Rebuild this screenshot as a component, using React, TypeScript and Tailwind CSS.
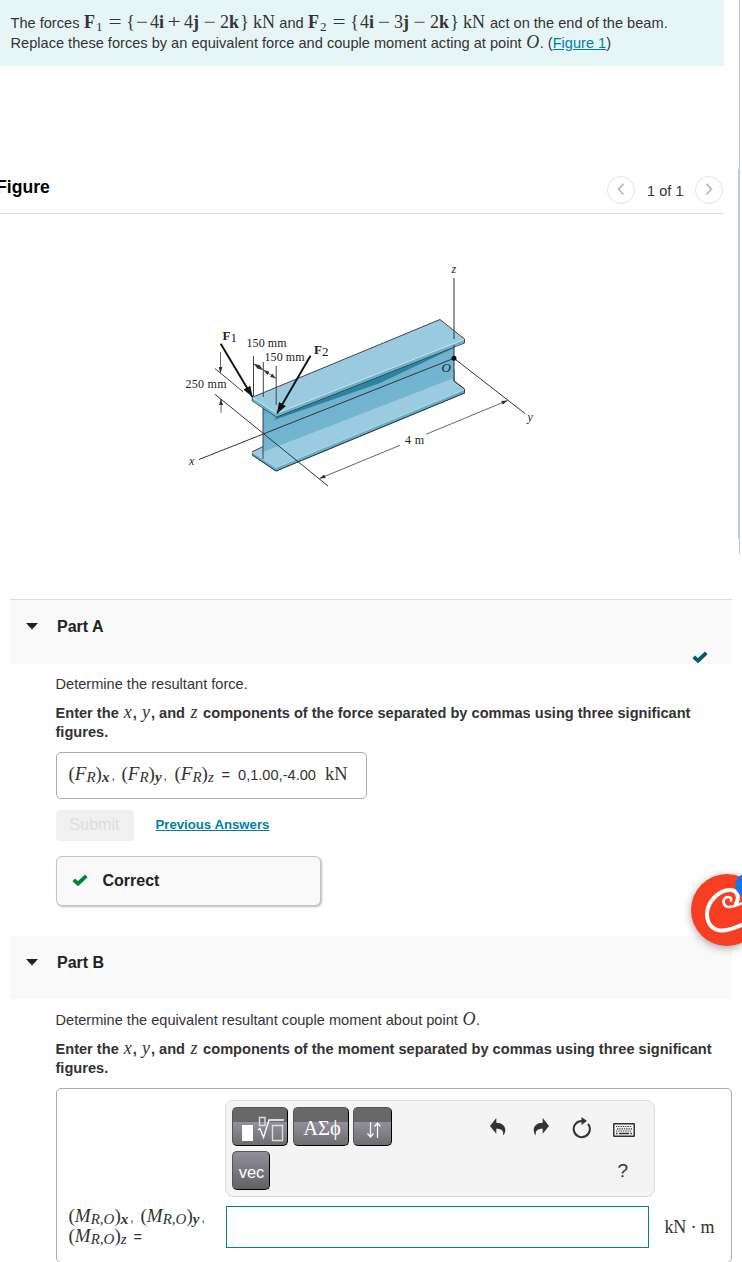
import { ReactNode } from 'react';

// a single glyph group of a formula, centred in its own slot
const Tok = ({ className = '', children }: { className?: string; children: ReactNode }) => (
  <span className={`inline-block whitespace-nowrap text-center ${className}`}>{children}</span>
);

interface VectorProps {
  index: string;
  first: ReactNode;
  second: ReactNode;
}

const Vector = ({ index, first, second }: VectorProps) => (
  <span className='inline-flex items-baseline font-["Liberation_Serif",serif] text-[18px] leading-5'>
    <Tok className="w-[22px] text-left font-bold">
      F<span className="relative top-[3px] ml-px text-[13px] font-normal leading-none">{index}</span>
    </Tok>
    <Tok className="w-[18px] scale-x-130">=</Tok>
    <Tok className="w-[11px] text-right">{'{'}</Tok>
    {first}
    {second}
    <Tok className="w-[21px] scale-x-120">−</Tok>
    <Tok className="w-[20px] text-left">2<b>k</b></Tok>
    <Tok className="w-[9px]">{'}'}</Tok>
    <Tok className="w-[26px] text-right">kN</Tok>
  </span>
);

interface ComponentLabelProps {
  name: string;
  sub: string;
  axis: string;
  end?: string;
  className: string;
}

const ComponentLabel = ({ name, sub, axis, end, className }: ComponentLabelProps) => (
  <span className={`inline-block whitespace-nowrap font-["Liberation_Serif",serif] text-[19px] leading-5 ${className}`}>
    (<i>{name}</i>
    <span className="relative top-0.5 text-[15px] italic leading-none">{sub}</span>)
    <span className={`relative top-0.5 text-[15px] italic leading-none ${axis === 'z' ? '' : 'font-bold'}`}>{axis}</span>
    {end && <span className='ml-[2px] font-["Liberation_Sans",sans-serif] text-[12px] leading-none'>{end}</span>}
  </span>
);

const Check = ({ className }: { className: string }) => (
  <svg className={className} width="16" height="12" viewBox="0 0 16 12" fill="none">
    <path d="M1.700 5.800 6 9.700 14.300 1.800" stroke="currentColor" strokeWidth="3.800" />
  </svg>
);

const Beam = () => (
  <svg className='block font-["Liberation_Serif",serif]' width="742" height="385" viewBox="0 214 742 385" fill="none">
    <defs>
      <linearGradient id="web" x1="340" y1="370" x2="360" y2="418" gradientUnits="userSpaceOnUse">
        <stop offset="0" stopColor="#2f8aa6" />
        <stop offset="0.25" stopColor="#6bb1ce" />
        <stop offset="1" stopColor="#75b6d2" />
      </linearGradient>
      <marker id="tip" viewBox="0 0 11 8" refX="11" refY="4" markerWidth="11" markerHeight="8" markerUnits="userSpaceOnUse" orient="auto">
        <path d="M0 0 11 4 0 8z" fill="#111" />
      </marker>
      <marker id="dim" viewBox="0 0 6 4" refX="6" refY="2" markerWidth="6" markerHeight="4" markerUnits="userSpaceOnUse" orient="auto-start-reverse">
        <path d="M0 0 6 2 0 4z" fill="#333" />
      </marker>
    </defs>

    {/* lower flange, web, upper flange */}
    <path d="M252.3 451.7 263 446.5 454 370 454 381 464.5 389 464.5 393 276 471 252.3 455z" fill="#9bcbe0" stroke="#333" strokeWidth="0.9" />
    <path d="M252.3 452 276 467.5 464.5 389.5 464.5 393 276 471 252.3 455z" fill="#62adc9" />
    <path d="M252.3 452 276 467.5 464.5 389.5" stroke="#badfeb" strokeWidth="0.8" />
    <path d="M263 400 454 335V378L263 452z" fill="url(#web)" />
    <path d="M277 416 454 344V348L380 383 274 420z" fill="#2c839c" />
    <path d="M263 404V459M252.3 455 276 471 464.5 393V389L454 381" stroke="#333" strokeWidth="0.9" />
    <path d="M252.3 397.3 440 319.5 464.5 339V343L276.5 417 252.3 401z" fill="#9acae0" stroke="#333" strokeWidth="0.9" />
    <path d="M253 398.5 276.5 413.5 464 340V342.7L276.5 416.5 253 401z" fill="#6bb1cb" />
    <path d="M253 398 276.5 413.5 464 339.5" stroke="#c5e4ee" />

    {/* axes */}
    <path d="M454 278V339M454 345V381M199 459.5 454 358.3 525 413.5M215 394.3 328 486" stroke="#333" />
    <circle cx="454" cy="358.3" r="2.500" fill="#111" />

    {/* dimensions */}
    <path d="M215 368.5 243 391.7M253.5 356V396M263.3 362V397M276.2 366V405" stroke="#444" />
    <g stroke="#555" strokeWidth="0.9">
      <path d="M220.5 352V373" markerEnd="url(#dim)" />
      <path d="M221 413V399" markerEnd="url(#dim)" />
      <path d="M400 445.3 319.500 478.500" markerEnd="url(#dim)" />
      <path d="M426 434.3 507.500 400.500" markerEnd="url(#dim)" />
      <path d="M253.700 363.700 263.300 370" markerEnd="url(#dim)" markerStart="url(#dim)" />
      <path d="M263.500 370 276 378.500" markerEnd="url(#dim)" markerStart="url(#dim)" />
    </g>

    {/* forces */}
    <path d="M220.7 343.7 252.5 397" stroke="#111" strokeWidth="1.900" markerEnd="url(#tip)" />
    <path d="M310.5 355.7 277 413.500" stroke="#111" strokeWidth="1.900" markerEnd="url(#tip)" />

    <g fill="#222" fontSize="12">
      <text x="222.5" y="340" fontSize="13" fontWeight="bold">F<tspan dy="1.5" fontWeight="normal">1</tspan></text>
      <text x="314" y="353.5" fontSize="13" fontWeight="bold">F<tspan dy="2" fontWeight="normal">2</tspan></text>
      <text x="246.5" y="347" textLength="40">150 mm</text>
      <text x="264.5" y="361" textLength="40">150 mm</text>
      <text x="185.5" y="388" textLength="41">250 mm</text>
      <text x="405" y="444" textLength="19">4 m</text>
      <g fontStyle="italic" fontSize="12">
        <text x="451.5" y="273">z</text>
        <text x="189" y="465">x</text>
        <text x="527.5" y="420.5">y</text>
        <text x="441.5" y="372" fontSize="13">O</text>
      </g>
    </g>
  </svg>
);

const PartHeader = ({ title }: { title: string }) => (
  <div className="flex items-center gap-5 pl-4 text-[16px] font-bold leading-5 text-[#222]">
    <svg className="-mt-0.5" width="12" height="7" viewBox="0 0 12 7"><path d="M0 0H12L6 6.5z" fill="#222" /></svg>
    <h2 className="-ml-px">{title}</h2>
  </div>
);

const variable = 'w-[10px] font-["Liberation_Serif",serif] text-[18px] font-normal italic leading-4';

const Instructions = ({ subject }: { subject: string }) => (
  <p className="mt-2.5 whitespace-nowrap font-bold leading-[19px]">
    Enter the <Tok className={variable}>x</Tok>, <Tok className={variable}>y</Tok>, and{' '}
    <Tok className={variable}>z</Tok> components of the {subject} separated by commas using three significant
    <br />
    figures.
  </p>
);

const toolButton = 'flex h-[39px] items-center justify-center rounded-[5px] border border-[#555] border-b-black border-r-black text-white';
const glossy = 'bg-[linear-gradient(#686868_0,#686868_38%,#918f9b_39%,#6e6e70_100%)]';

const Toolbar = () => (
  <div className="flex h-[97px] w-[430px] justify-between rounded-lg border border-[#dcdcdc] bg-[#f4f4f4] p-1.5 text-[#333]">
    <div className="flex flex-col gap-[5px]">
      <div className="flex gap-[5px]">
        <button className={`${toolButton} ${glossy} w-14`}>
          <svg width="54" height="36" viewBox="0 0 54 36" fill="none">
            <path d="M9 16H20V32H9z" fill="#fff" />
            <path d="M26.500 8.500h5.500v8h-5.500zM39.500 16.500h10v15h-10z" stroke="#ddd" strokeWidth="1.400" />
            <path d="M25 21 27 19.500 30.500 28.500 36 11H51" stroke="#fff" strokeWidth="1.300" />
          </svg>
        </button>
        <button className={`${toolButton} ${glossy} w-14 pl-[3px] pt-1 font-["Liberation_Serif",serif] text-[20.500px]`}>ΑΣϕ</button>
        <button className={`${toolButton} ${glossy} -ml-px w-[39px]`}>
          <svg className="ml-1 mt-1.5" width="16" height="18" viewBox="0 0 16 18" fill="none" stroke="#fff" strokeWidth="1.2">
            <path d="M4.500 1V16M1.500 12.500 4.500 16 7.500 12.500M11.500 17V2M8.500 5.500 11.500 2 14.500 5.500" />
          </svg>
        </button>
      </div>
      <button className={`${toolButton} w-[38px] bg-[linear-gradient(#918f9b,#626262)] pl-0.5 pt-[3px] text-[16.500px]`}>vec</button>
    </div>
    <div className="flex w-[158px] flex-col pt-[11px]">
      <div className="flex items-start">
        <svg className="mr-[27px]" width="16" height="18" viewBox="0 0 16 18">
          <path d="M0 8 6.300 0V4.700C12 4.700 15.300 8 15.300 12 15.300 14.500 14.300 16.500 13 17.500 14 13 12 10.700 6.300 10.700V15.700z" fill="#333" />
        </svg>
        <svg className="mr-[23px] -scale-x-100" width="16" height="18" viewBox="0 0 16 18">
          <path d="M0 8 6.300 0V4.700C12 4.700 15.300 8 15.300 12 15.300 14.500 14.300 16.500 13 17.500 14 13 12 10.700 6.300 10.700V15.700z" fill="#333" />
        </svg>
        <svg className="-mt-px mr-[21px]" width="20" height="22" viewBox="0 0 20 22" fill="none">
          <path d="M16 6.800A8.100 8.100 0 1 1 10 3.900" stroke="#333" strokeWidth="2" />
          <path d="M9.500 0 15 4 9.500 8z" fill="#333" />
        </svg>
        <svg className="mt-[5px]" width="22" height="14" viewBox="0 0 22 14" fill="none" stroke="#333">
          <rect x="0.750" y="0.750" width="20.500" height="12.500" rx="0.500" strokeWidth="1.500" />
          <path d="M3 3.500H19M4 5.800H19M3 8H19" strokeDasharray="1.300 1" strokeWidth="1.200" />
          <path d="M3 10.500H4.500M6 10.500H16M17.500 10.500H19" strokeWidth="1.300" />
        </svg>
      </div>
      <span className="ml-[128px] mt-[22px] text-[19px] leading-5">?</span>
    </div>
  </div>
);

const App = () => (
  <div className='relative h-[1262px] w-[742px] overflow-hidden bg-white font-["Liberation_Sans",Arial,sans-serif] text-[14.6px] text-[#333]'>
    {/* panel divider with its scroll thumb */}
    <div className="absolute left-[739px] top-0 h-[554px] w-px bg-[#b9cbdf]" />
    <div className="absolute left-[738px] top-[169px] h-[370px] w-0.5 bg-[#b9cbdf]" />

    <div className="h-[66px] w-[724px] whitespace-nowrap bg-[#e6f6f6] pl-[10.500px] pt-3 leading-5">
      <p className="flex h-[21px] items-baseline">
        <span className="w-[73.500px]">The forces</span>
        <Vector
          index="1"
          first={<><Tok className="w-[14px] scale-x-120">−</Tok><Tok className="w-[15px] text-right">4<b>i</b></Tok></>}
          second={<><Tok className="w-[20px] scale-x-130">+</Tok><Tok className="w-[15px] text-right">4<b>j</b></Tok></>}
        />
        <span className="w-[33px] text-center">and</span>
        <Vector
          index="2"
          first={<Tok className="w-[15px] text-right">4<b>i</b></Tok>}
          second={<><Tok className="w-[20px] scale-x-120">−</Tok><Tok className="w-[15px]">3<b>j</b></Tok></>}
        />
        <span className="ml-[5px]">act on the end of the beam.</span>
      </p>
      <p className="h-5">
        Replace these forces by an equivalent force and couple moment acting at point{' '}
        <Tok className='w-[14px] font-["Liberation_Serif",serif] text-[18px] italic leading-4'>O</Tok>. (<a className="text-[#007fa3] underline">Figure 1</a>)
      </p>
    </div>

    <div className="mt-[104px] flex h-11 w-[723px] justify-between border-b border-[#dcdcdc] pt-1.5">
      <h1 className="-ml-[4px] pt-px text-[17.600px] font-bold leading-5 text-black">Figure</h1>
      <div className="flex h-[27px] items-center gap-[11.500px]">
        <svg width="28" height="28" viewBox="0 0 28 28" fill="none"><circle cx="14" cy="14" r="13.500" stroke="#e3e3e3" /><path d="M16.500 8 11.500 13 16.500 18.500" stroke="#bbb" strokeWidth="1.800" /></svg>
        <span className="pt-1">1 of 1</span>
        <svg width="28" height="28" viewBox="0 0 28 28" fill="none"><circle cx="14" cy="14" r="13.500" stroke="#e3e3e3" /><path d="M11.500 8 16.500 13 11.500 18.500" stroke="#bbb" strokeWidth="1.800" /></svg>
      </div>
    </div>

    <Beam />

    <section className="ml-2.5 w-[722px]">
      <header className="h-[65px] border-t border-[#dcdcdc] bg-[#f9f9f9] pt-[17px]">
        <PartHeader title="Part A" />
        <Check className="ml-[682px] mt-[14px] text-[#005a70]" />
      </header>
      <div className="ml-[45.500px] pt-2.5">
        <p className="leading-5">Determine the resultant force.</p>
        <Instructions subject="force" />
        <div className="mt-2.5 flex h-[47px] w-[311px] items-baseline whitespace-nowrap rounded-[5px] border border-[#aaa] pl-3 pt-[11px]">
          <ComponentLabel name="F" sub="R" axis="x" end="," className="w-[53px]" />
          <ComponentLabel name="F" sub="R" axis="y" end="," className="w-[53px]" />
          <ComponentLabel name="F" sub="R" axis="z" className="w-[47px]" />
          <span>=</span>
          <span className="ml-2">0,1.00,-4.00</span>
          <span className='ml-[9px] font-["Liberation_Serif",serif] text-[18.500px] leading-5'>kN</span>
        </div>
        <div className="mt-[11px] flex h-[31px] items-center gap-[22px]">
          <span className="flex h-[31px] w-[78px] items-center justify-center rounded-sm bg-[#f0f0f0] pb-0.5 text-[16px] text-[#ddd]">Submit</span>
          <a className="pb-0.5 text-[13.200px] font-bold text-[#007fa3] underline">Previous Answers</a>
        </div>
        <div className="mt-[15px] flex h-[50px] w-[265px] items-center gap-[15px] rounded-md border border-[#c4c4c4] bg-[#f9f9f9] pl-[15px] text-[16px] font-bold text-[#222] shadow-[1px_1px_2px_#bbb]">
          <Check className="-mt-0.5 text-[#008638]" />
          Correct
        </div>
      </div>
    </section>

    <section className="ml-2.5 mt-[30px] w-[722px]">
      <header className="h-[63px] bg-[#f9f9f9] pt-[17px]">
        <PartHeader title="Part B" />
      </header>
      <div className="ml-[45.500px] pt-[11px]">
        <p className="leading-5">
          Determine the equivalent resultant couple moment about point{' '}
          <Tok className='w-[14px] font-["Liberation_Serif",serif] text-[18px] italic leading-4'>O</Tok>.
        </p>
        <Instructions subject="moment" />
        <div className="mt-2.5 h-[175px] w-[676px] rounded-[5px] border border-[#aaa] pt-[11px]">
          <div className="ml-[168px]"><Toolbar /></div>
          <div className="mt-[9px] flex items-center">
            <div className="w-[169px] whitespace-nowrap pb-0.5 pl-3 leading-5">
              <div className="flex h-5 items-baseline">
                <ComponentLabel name="M" sub="R,O" axis="x" end="," className="w-[72px]" />
                <ComponentLabel name="M" sub="R,O" axis="y" end="," className="w-[72px]" />
              </div>
              <div className="flex h-5 items-baseline">
                <ComponentLabel name="M" sub="R,O" axis="z" className="w-[65px]" />
                <span>=</span>
              </div>
            </div>
            <div className="h-[42px] w-[423px] border border-[#007fa3] bg-white" />
            <span className='ml-4 font-["Liberation_Serif",serif] text-[18px] tracking-[-0.2px]'>kN · m</span>
          </div>
        </div>
      </div>
    </section>

    {/* floating assistant button */}
    <svg className="absolute left-[680px] top-[864px] drop-shadow-[0_2px_4px_rgba(0,0,0,0.35)]" width="62" height="94" viewBox="680 864 62 94" fill="none">
      <circle cx="727" cy="910" r="36" fill="#f73e22" />
      <path d="M744 902C739 905 733 907 728 907C723 906 722 900 726 897.500C729 896 732 898 731 900.500" stroke="#fff" strokeWidth="2.600" strokeLinecap="round" />
      <path d="M736 904C740 897 737 890 730 890C718 890 707 903 707 914C707 926 715 931 723 930.500C731 930 737 927 744 924" stroke="#fff" strokeWidth="4" strokeLinecap="round" />
      <circle cx="747" cy="885" r="11.500" fill="#0b76ff" />
    </svg>
  </div>
);

export default App;
